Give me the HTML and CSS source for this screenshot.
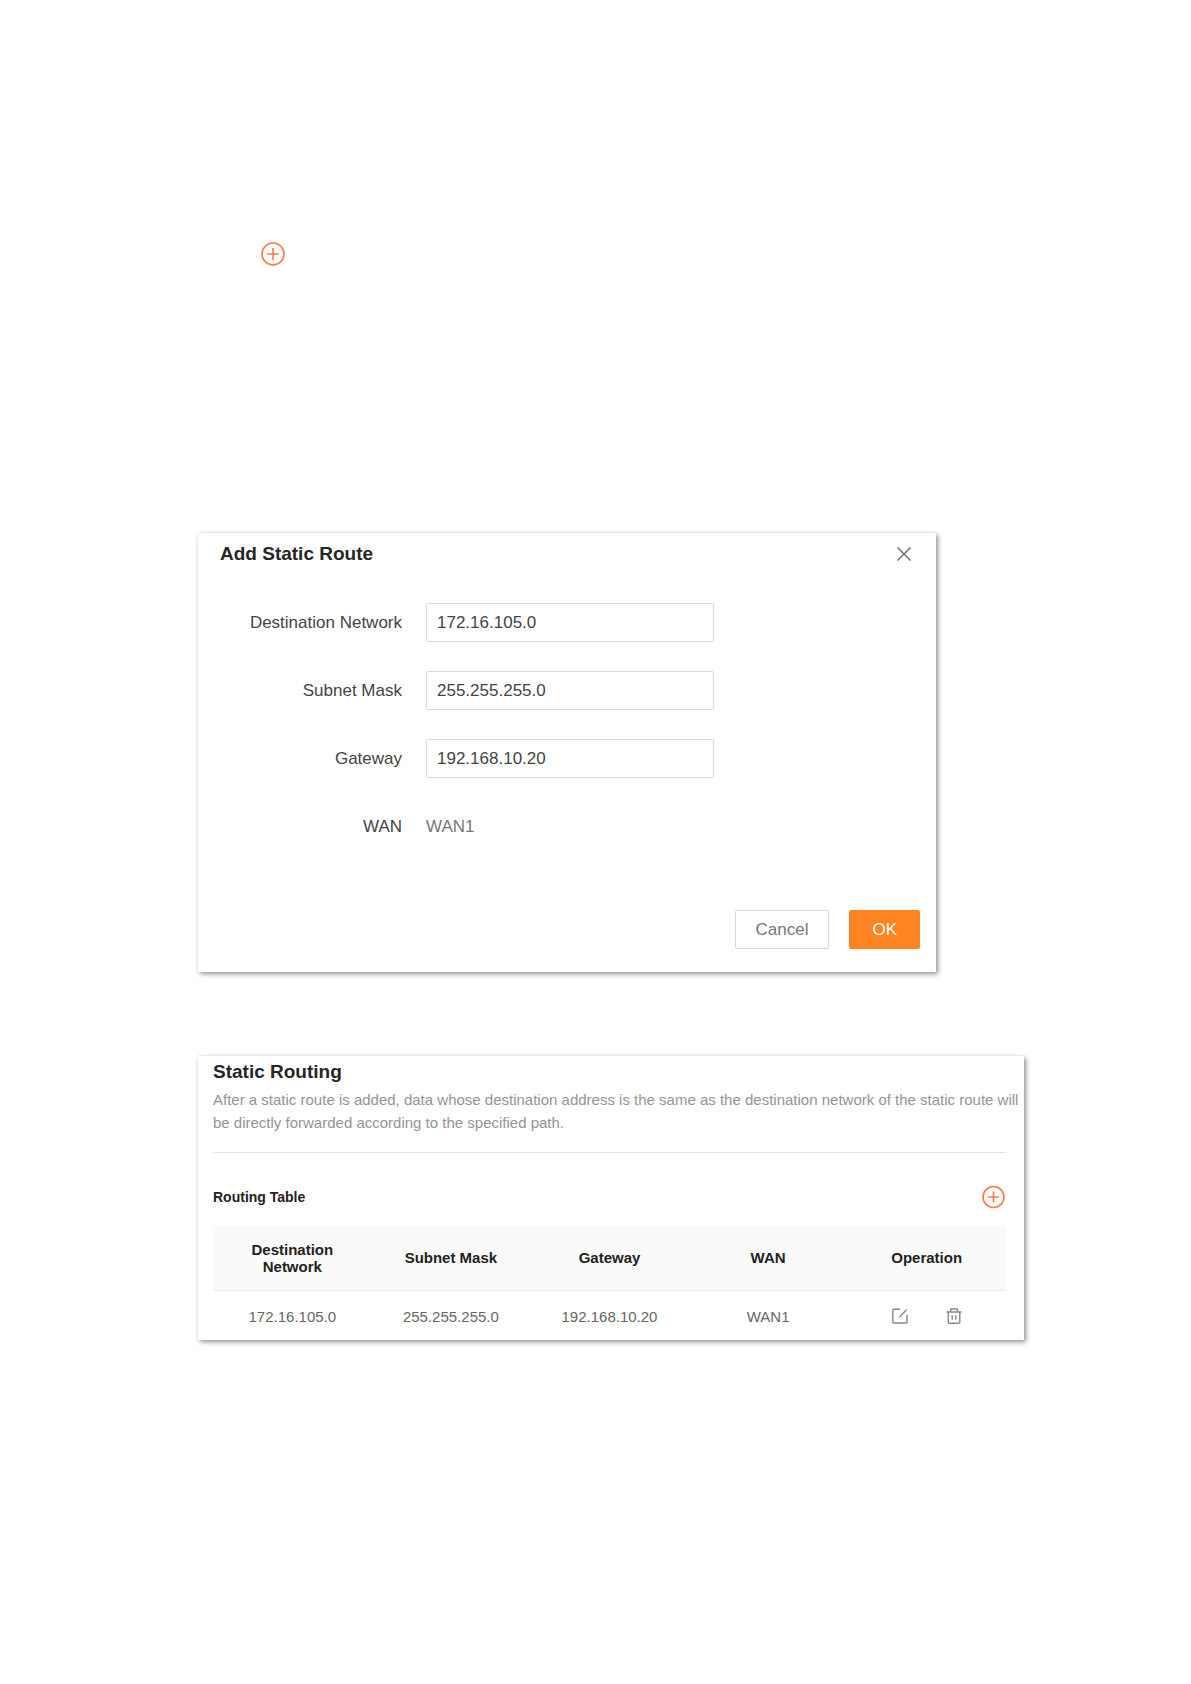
FILE: index.html
```html
<!DOCTYPE html>
<html lang="en">
<head>
    <meta charset="UTF-8">
    <meta name="viewport" content="width=device-width, initial-scale=1.0">
    <title>Static Routing</title>
    <link rel="stylesheet" href="styles.css">
</head>
<body>
    <main>
        <button type="button" class="icon-button add-large" aria-label="Add">
            <svg width="24" height="24" viewBox="0 0 24 24">
                <circle cx="12" cy="12" r="11"/>
                <path d="M12 6v12M6 12h12"/>
            </svg>
        </button>

        <section class="panel dialog">
            <header class="dialog-header">
                <h2>Add Static Route</h2>
                <button type="button" class="icon-button close" aria-label="Close">
                    <svg width="16" height="16" viewBox="0 0 16 16">
                        <path d="M1.5 1.5l13 13M14.5 1.5l-13 13"/>
                    </svg>
                </button>
            </header>
            <form>
                <div class="form-row">
                    <label for="destination">Destination Network</label>
                    <input type="text" id="destination" value="172.16.105.0">
                </div>
                <div class="form-row">
                    <label for="mask">Subnet Mask</label>
                    <input type="text" id="mask" value="255.255.255.0">
                </div>
                <div class="form-row">
                    <label for="gateway">Gateway</label>
                    <input type="text" id="gateway" value="192.168.10.20">
                </div>
                <div class="form-row">
                    <label for="wan">WAN</label>
                    <output id="wan">WAN1</output>
                </div>
                <div class="dialog-footer">
                    <button type="button" class="btn">Cancel</button>
                    <button type="submit" class="btn btn-primary">OK</button>
                </div>
            </form>
        </section>

        <section class="panel routing">
            <h2>Static Routing</h2>
            <p class="description">After a static route is added, data whose destination address is the same as the destination network of the static route will be directly forwarded according to the specified path.</p>
            <div class="table-title">
                <h3>Routing Table</h3>
                <button type="button" class="icon-button add" aria-label="Add route">
                    <svg width="24" height="24" viewBox="0 0 24 24">
                        <circle cx="11.5" cy="12" r="10.5"/>
                        <path d="M11.5 6.5v11M6 12h11"/>
                    </svg>
                </button>
            </div>
            <table>
                <thead>
                    <tr>
                        <th>Destination Network</th>
                        <th>Subnet Mask</th>
                        <th>Gateway</th>
                        <th>WAN</th>
                        <th>Operation</th>
                    </tr>
                </thead>
                <tbody>
                    <tr>
                        <td>172.16.105.0</td>
                        <td>255.255.255.0</td>
                        <td>192.168.10.20</td>
                        <td>WAN1</td>
                        <td>
                            <div class="operations">
                                <button type="button" class="icon-button" aria-label="Edit">
                                    <svg width="16" height="16" viewBox="0 0 16 16">
                                        <path d="M8 1.2H1.8q-1 0-1 1v11.8q0 1 1 1h12.2q1 0 1-1V7M7.5 9.2l7.2-7.6"/>
                                    </svg>
                                </button>
                                <button type="button" class="icon-button" aria-label="Delete">
                                    <svg width="16" height="16" viewBox="0 0 16 16">
                                        <path d="M.5 4h15M4.3 3.8l.6-2.8h6.2l.6 2.8M2.2 4v10.2q0 1 1 1h9.6q1 0 1-1V4M6.2 7.2v4.6M9.8 7.2v4.6"/>
                                    </svg>
                                </button>
                            </div>
                        </td>
                    </tr>
                </tbody>
            </table>
        </section>
    </main>
</body>
</html>
```

FILE: styles.css
```css
* {
    box-sizing: border-box;
}

body {
    margin: 0;
    background-color: #fff;
    color: #444;
    font-family: "Liberation Sans", Arial, sans-serif;
    font-size: 15px;
}

main {
    padding: 242px 167px 80px 198px;
}

h2,
h3,
p {
    margin: 0;
}

h2 {
    color: #262626;
    font-size: 19px;
    line-height: 24px;
}

h3 {
    color: #222;
    font-size: 14px;
}

.icon-button {
    display: block;
    padding: 0;
    border: none;
    background: none;
    cursor: pointer;
}

.icon-button svg {
    display: block;
    fill: none;
    stroke: #888;
    stroke-width: 1.4;
}

.add svg,
.add-large svg {
    stroke: #ff7a45;
    stroke-width: 1.6;
}

.add-large {
    margin: 0 0 267px 63px;
}

.panel {
    background-color: #fff;
    box-shadow: 2px 2px 5px rgba(0, 0, 0, 0.42), 0 0 3px rgba(0, 0, 0, 0.06);
}

/* dialog */
.dialog {
    max-width: 738px;
    margin-bottom: 84px;
    padding: 9px 16px 23px 22px;
}

.dialog-header {
    display: flex;
    justify-content: space-between;
    align-items: center;
    margin-bottom: 37px;
}

.close {
    margin-right: 8px;
}

.close svg {
    stroke: #666;
}

.form-row {
    display: grid;
    grid-template-columns: 182px minmax(0, 288px);
    column-gap: 24px;
    align-items: center;
    min-height: 39px;
    margin-bottom: 29px;
    font-size: 17px;
}

.form-row label {
    text-align: right;
}

.form-row input {
    width: 100%;
    height: 39px;
    padding: 0 10px;
    border: 1px solid #d9d9d9;
    border-radius: 2px;
    color: #444;
    font: inherit;
}

.form-row output {
    color: #777;
}

.dialog-footer {
    display: flex;
    justify-content: flex-end;
    gap: 20px;
    margin-top: 64px;
}

.btn {
    height: 39px;
    padding: 0 20px;
    border: 1px solid #d9d9d9;
    border-radius: 2px;
    background-color: #fff;
    color: #777;
    font: inherit;
    font-size: 17px;
    cursor: pointer;
}

.btn-primary {
    padding: 0 22px;
    border-color: #ff8320;
    background-color: #ff8320;
    color: #fff;
}

/* routing table */
.routing {
    padding: 4px 18px 0 15px;
}

.description {
    margin-right: -16px;
    padding: 4px 0 18px;
    color: #949494;
    line-height: 23px;
}

.table-title {
    display: flex;
    justify-content: space-between;
    align-items: center;
    padding: 32px 0 17px;
    border-top: 1px solid #e6e6e6;
}

table {
    width: 100%;
    border-collapse: collapse;
    table-layout: fixed;
    text-align: center;
}

th {
    height: 64px;
    padding: 0 24px;
    border-bottom: 1px solid #ebebeb;
    background-color: #fafafa;
    color: #222;
    line-height: 17px;
}

td {
    height: 50px;
    padding: 2px 0 0;
    color: #666;
}

.operations {
    display: flex;
    justify-content: center;
    gap: 38px;
}
```
